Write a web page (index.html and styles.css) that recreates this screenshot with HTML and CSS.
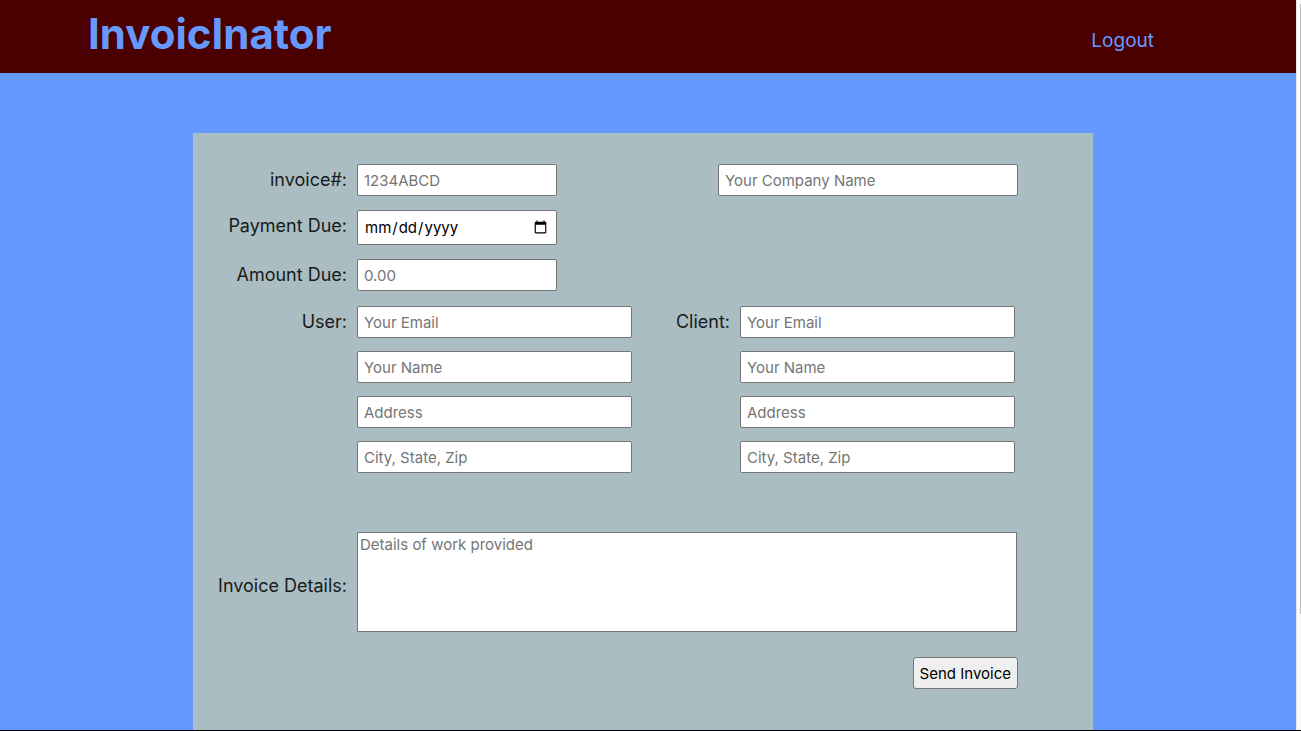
FILE: index.html
```html
<!DOCTYPE html>
<html lang="en">
<head>
<meta charset="utf-8">
<meta name="viewport" content="width=device-width, initial-scale=1">
<title>InvoicInator</title>
<link rel="stylesheet" href="styles.css">
</head>
<body>
<div class="page">
  <header class="header">
    <h1 class="brand">InvoicInator</h1>
    <a class="logout" href="#">Logout</a>
  </header>
  <main class="main">
    <form class="panel">
      <div class="summary">
        <div class="facts">
          <label class="label" for="number">invoice#:</label>
          <input class="field" id="number" type="text" placeholder="1234ABCD">
          <label class="label" for="due">Payment Due:</label>
          <input class="field field-date" id="due" type="date">
          <label class="label" for="amount">Amount Due:</label>
          <input class="field" id="amount" type="text" placeholder="0.00">
        </div>
        <input class="field company" type="text" placeholder="Your Company Name" aria-label="Company name">
      </div>
      <div class="parties">
        <label class="label" for="user-email">User:</label>
        <div class="stack">
          <input class="field" id="user-email" type="email" placeholder="Your Email">
          <input class="field" type="text" placeholder="Your Name" aria-label="User name">
          <input class="field" type="text" placeholder="Address" aria-label="User address">
          <input class="field" type="text" placeholder="City, State, Zip" aria-label="User city, state, zip">
        </div>
        <label class="label" for="client-email">Client:</label>
        <div class="stack">
          <input class="field" id="client-email" type="email" placeholder="Your Email">
          <input class="field" type="text" placeholder="Your Name" aria-label="Client name">
          <input class="field" type="text" placeholder="Address" aria-label="Client address">
          <input class="field" type="text" placeholder="City, State, Zip" aria-label="Client city, state, zip">
        </div>
      </div>
      <div class="work">
        <label class="label work-label" for="details">Invoice Details:</label>
        <textarea class="details" id="details" placeholder="Details of work provided"></textarea>
      </div>
      <div class="actions">
        <button class="send" type="button">Send Invoice</button>
      </div>
    </form>
  </main>
</div>
<div class="track"><div class="thumb"></div></div>
</body>
</html>
```

FILE: styles.css
```css
* {
  box-sizing: border-box;
}

body {
  display: flex;
  height: 100vh;
  margin: 0;
  overflow: hidden;
  border-bottom: 1px solid #000;
  background: #69f;
  color: #1a1a1a;
  font-family: Inter, "Liberation Sans", sans-serif;
  font-size: 18px;
  line-height: 32px;
}

.page {
  display: flex;
  flex: 1;
  flex-direction: column;
  min-width: 0;
}

.header {
  display: flex;
  align-items: center;
  justify-content: space-between;
  padding: 0 142px 5px 88px;
  background: #4a0000;
  color: #69f;
}

.brand {
  margin: 0;
  font-size: 42px;
  font-weight: 700;
  line-height: 68px;
}

.logout {
  padding-top: 14px;
  color: inherit;
  font-size: 19px;
  text-decoration: none;
}

.main {
  display: flex;
  flex: 1;
  justify-content: center;
  padding: 60px 10px 0 0;
}

.panel {
  width: 100%;
  max-width: 900px;
  padding: 31px 75px 0 0;
  background: #a9bdc3;
}

.summary {
  display: flex;
  align-items: flex-start;
  justify-content: space-between;
  margin-bottom: 15px;
}

.facts {
  display: grid;
  grid-template-columns: 154px 200px;
  gap: 14px 10px;
}

.label {
  text-align: right;
  white-space: nowrap;
}

.field {
  width: 100%;
  height: 32px;
  padding: 0 6px;
  border: 1px solid #767676;
  border-radius: 2px;
  background: #fff;
  color: #000;
  font-family: inherit;
  font-size: 15px;
}

.field-date {
  height: 35px;
}

.company {
  max-width: 300px;
}

.field::placeholder,
.details::placeholder {
  color: #757575;
}

.parties {
  display: grid;
  grid-template-columns: 154px minmax(0, 275px) 88px minmax(0, 275px);
  gap: 10px;
}

.stack {
  display: grid;
  gap: 13px;
}

.work {
  display: grid;
  grid-template-columns: 154px minmax(0, 660px);
  gap: 10px;
  align-items: center;
  margin-top: 59px;
}

.work-label {
  padding-top: 8px;
}

.details {
  height: 100px;
  padding: 2px;
  border: 1px solid #767676;
  background: #fff;
  color: #000;
  font-family: inherit;
  font-size: 15px;
  line-height: 20px;
  resize: none;
}

.actions {
  display: flex;
  justify-content: flex-end;
  padding: 25px 0 41px;
}

.send {
  height: 32px;
  padding: 0 6px;
  border: 1px solid #767676;
  border-radius: 3px;
  background: #efefef;
  color: #000;
  font-family: inherit;
  font-size: 15px;
}

.track {
  width: 5px;
  padding: 4px 0 0 3px;
  border-left: 1px solid #e8e8e8;
  background: #fafafa;
}

.thumb {
  height: 84%;
  background: #c1c1c1;
}
```
